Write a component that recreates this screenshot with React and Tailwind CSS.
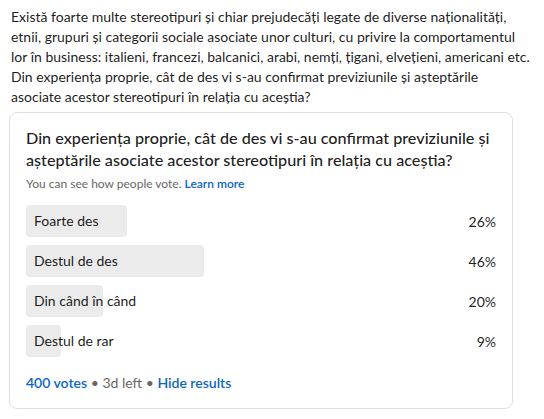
import React from 'react';

const options = [
  { label: 'Foarte des', pct: 26 },
  { label: 'Destul de des', pct: 46 },
  { label: 'Din când în când', pct: 20 },
  { label: 'Destul de rar', pct: 9 },
];

export default function App() {
  return (
    <div
      className="w-[544px] h-[419px] bg-white text-[rgba(0,0,0,0.9)] overflow-hidden"
      style={{ fontFamily: 'Lato, "Liberation Sans", sans-serif' }}
    >
      <p className="pl-[11px] pr-1 pt-[7px] text-[14px] leading-[20px] whitespace-nowrap">
        Există foarte multe stereotipuri și chiar prejudecăți legate de diverse naționalități,<br />
        etnii, grupuri și categorii sociale asociate unor culturi, cu privire la comportamentul<br />
        lor în business: italieni, francezi, balcanici, arabi, nemți, țigani, elvețieni, americani etc.<br />
        Din experiența proprie, cât de des vi s-au confirmat previziunile și așteptările<br />
        asociate acestor stereotipuri în relația cu aceștia?
      </p>

      <div className="ml-[9px] mt-[5px] w-[504px] rounded-lg border border-[#e0dfdc] px-[16px] pt-[14px] pb-[15px]">
        <h3 className="text-[16.2px] leading-[22px] font-medium whitespace-nowrap">
          Din experiența proprie, cât de des vi s-au confirmat previziunile și<br />
          așteptările asociate acestor stereotipuri în relația cu aceștia?
        </h3>
        <p className="mt-[5px] text-[12px] leading-[16px] text-[#666666]">
          You can see how people vote. <span className="font-semibold text-[#0a66c2]">Learn more</span>
        </p>

        <div className="mt-[13px] flex flex-col gap-2">
          {options.map((o) => (
            <div key={o.label} className="flex items-center h-8">
              <div className="relative flex-1 h-8">
                <div
                  className="absolute left-0 top-0 h-8 rounded bg-[#ebebeb]"
                  style={{ width: `${o.pct}%` }}
                />
                <span className="relative pl-2 text-[14px] leading-8">{o.label}</span>
              </div>
              <div className="w-[83px] text-right text-[14px]">{o.pct}%</div>
            </div>
          ))}
        </div>

        <div className="mt-[16px] text-[14px] leading-[20px] text-[#666666]">
          <span className="font-semibold text-[#0a66c2]">400 votes</span>
          <span> • 3d left • </span>
          <span className="font-semibold text-[#0a66c2]">Hide results</span>
        </div>
      </div>
    </div>
  );
}
